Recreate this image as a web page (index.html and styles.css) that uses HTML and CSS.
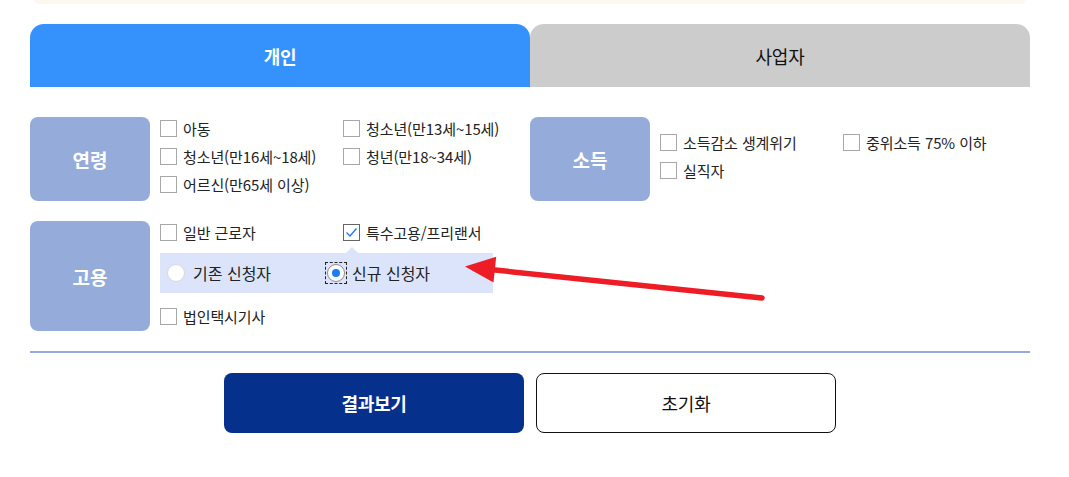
FILE: index.html
```html
<!DOCTYPE html>
<html lang="ko">
<head>
<meta charset="utf-8">
<title>지원 대상 선택</title>
<link rel="stylesheet" href="styles.css">
</head>
<body>
<div class="page">
  <div class="topbar"></div>
  <div class="tabs">
    <div class="tab tab-active">개인</div>
    <div class="tab">사업자</div>
  </div>

  <div class="groups">
    <div class="group">
      <div class="group-label">연령</div>
      <div class="options">
        <label class="check"><span class="box"></span>아동</label>
        <label class="check"><span class="box"></span>청소년(만13세~15세)</label>
        <label class="check"><span class="box"></span>청소년(만16세~18세)</label>
        <label class="check"><span class="box"></span>청년(만18~34세)</label>
        <label class="check"><span class="box"></span>어르신(만65세 이상)</label>
      </div>
    </div>

    <div class="group">
      <div class="group-label">소득</div>
      <div class="options options-income">
        <label class="check"><span class="box"></span>소득감소 생계위기</label>
        <label class="check"><span class="box"></span>중위소득 75% 이하</label>
        <label class="check"><span class="box"></span>실직자</label>
      </div>
    </div>

    <div class="group">
      <div class="group-label">고용</div>
      <div class="options options-employ">
        <label class="check"><span class="box"></span>일반 근로자</label>
        <label class="check"><span class="box box-checked"><svg viewBox="0 0 17 17" width="17" height="17"><path d="M3.5 8.5 L7 12 L13.5 4.5" fill="none" stroke="#1a7ff0" stroke-width="1.4"/></svg></span>특수고용/프리랜서</label>
        <div class="subpanel">
          <label class="radio radio-first"><span class="dot"></span>기존 신청자</label>
          <label class="radio radio-focused"><span class="focus-ring"><span class="dot dot-on"></span></span>신규 신청자</label>
        </div>
        <label class="check"><span class="box"></span>법인택시기사</label>
      </div>
    </div>
  </div>

  <div class="divider"></div>

  <div class="actions">
    <button class="btn btn-primary">결과보기</button>
    <button class="btn btn-outline">초기화</button>
  </div>
</div>

<svg class="annotation" width="1069" height="477" viewBox="0 0 1069 477">
  <line x1="762" y1="298" x2="488" y2="269.3" stroke="#ee1c25" stroke-width="5.5" stroke-linecap="round"/>
  <polygon points="465,266.5 496.2,256.7 493.5,282.5" fill="#ee1c25"/>
</svg>
</body>
</html>
```

FILE: styles.css
```css
* {
  box-sizing: border-box;
}

body {
  margin: 0;
  position: relative;
  background: #ffffff;
  font-family: "Noto Sans CJK KR", "Noto Sans", sans-serif;
  color: #222222;
}

.page {
  width: 1000px;
  margin-left: 30px;
}

.topbar {
  height: 4px;
  margin: 0 5px;
  background: #fdf8ef;
  border-radius: 0 0 8px 8px;
}

.tabs {
  display: flex;
  margin-top: 20px;
  height: 63px;
}

.tab {
  flex: 1;
  display: flex;
  align-items: center;
  justify-content: center;
  background: #cccccc;
  border-radius: 14px 14px 0 0;
  font-size: 18px;
  color: #111111;
  letter-spacing: -0.3px;
}

.tab-active {
  background: #3592fd;
  color: #ffffff;
  font-weight: 700;
}

.groups {
  display: grid;
  grid-template-columns: 500px 500px;
  row-gap: 20px;
  margin-top: 30px;
}

.group {
  display: flex;
  gap: 10px;
}

.group-label {
  width: 120px;
  min-height: 84px;
  flex-shrink: 0;
  display: flex;
  align-items: center;
  justify-content: center;
  background: #95acdb;
  border-radius: 8px;
  color: #ffffff;
  font-size: 19px;
  font-weight: 700;
}

.options {
  display: grid;
  grid-template-columns: 183px 183px;
  grid-auto-rows: 24px;
  row-gap: 4px;
  align-content: start;
  margin-top: -1px;
}

.options-income {
  padding-top: 14px;
}

.options-employ {
  padding-bottom: 3px;
}

.check {
  display: flex;
  align-items: center;
  gap: 6px;
  font-size: 15px;
  letter-spacing: -0.1px;
  white-space: nowrap;
}

.box {
  width: 17px;
  height: 17px;
  flex-shrink: 0;
  border: 1px solid #a8a8a8;
  background: #ffffff;
  display: flex;
  align-items: center;
  justify-content: center;
}

.box svg {
  display: block;
  margin: -1px;
}

.box-checked {
  border-color: #666666;
}

.subpanel {
  grid-column: 1 / -1;
  width: 333px;
  height: 40px;
  margin-top: 5px;
  margin-bottom: 3px;
  grid-row: span 2;
  align-self: start;
  position: relative;
  background: #dce4fb;
  display: flex;
  align-items: center;
  padding-left: 7px;
}

.subpanel::before {
  content: "";
  position: absolute;
  left: 186px;
  top: -6px;
  border-left: 6px solid transparent;
  border-right: 6px solid transparent;
  border-bottom: 6px solid #dce4fb;
}

.radio {
  display: flex;
  align-items: center;
  gap: 8px;
  font-size: 16px;
  color: #222222;
  white-space: nowrap;
}

.radio-first {
  width: 158px;
}

.radio-focused {
  gap: 5px;
}

.focus-ring {
  display: flex;
  padding: 1px;
  border: 1px dashed #222222;
}

.dot {
  width: 18px;
  height: 18px;
  border-radius: 50%;
  background: #ffffff;
  border: 1px solid #d8d8d8;
  display: flex;
  align-items: center;
  justify-content: center;
  flex-shrink: 0;
}

.dot-on {
  border-color: #8a8a8a;
}

.dot-on::after {
  content: "";
  width: 8px;
  height: 8px;
  border-radius: 50%;
  background: #1a7ff0;
}

.divider {
  height: 2px;
  background: #95acdb;
  margin-top: 20px;
}

.actions {
  display: flex;
  justify-content: center;
  gap: 12px;
  margin-top: 20px;
}

.btn {
  width: 300px;
  height: 60px;
  border-radius: 8px;
  font-family: inherit;
  font-size: 18px;
  letter-spacing: -0.3px;
  cursor: pointer;
}

.btn-primary {
  background: #05308c;
  border: none;
  color: #ffffff;
  font-weight: 700;
}

.btn-outline {
  background: #ffffff;
  border: 1px solid #111111;
  color: #111111;
}

.annotation {
  position: absolute;
  left: 0;
  top: 0;
  pointer-events: none;
}
```
